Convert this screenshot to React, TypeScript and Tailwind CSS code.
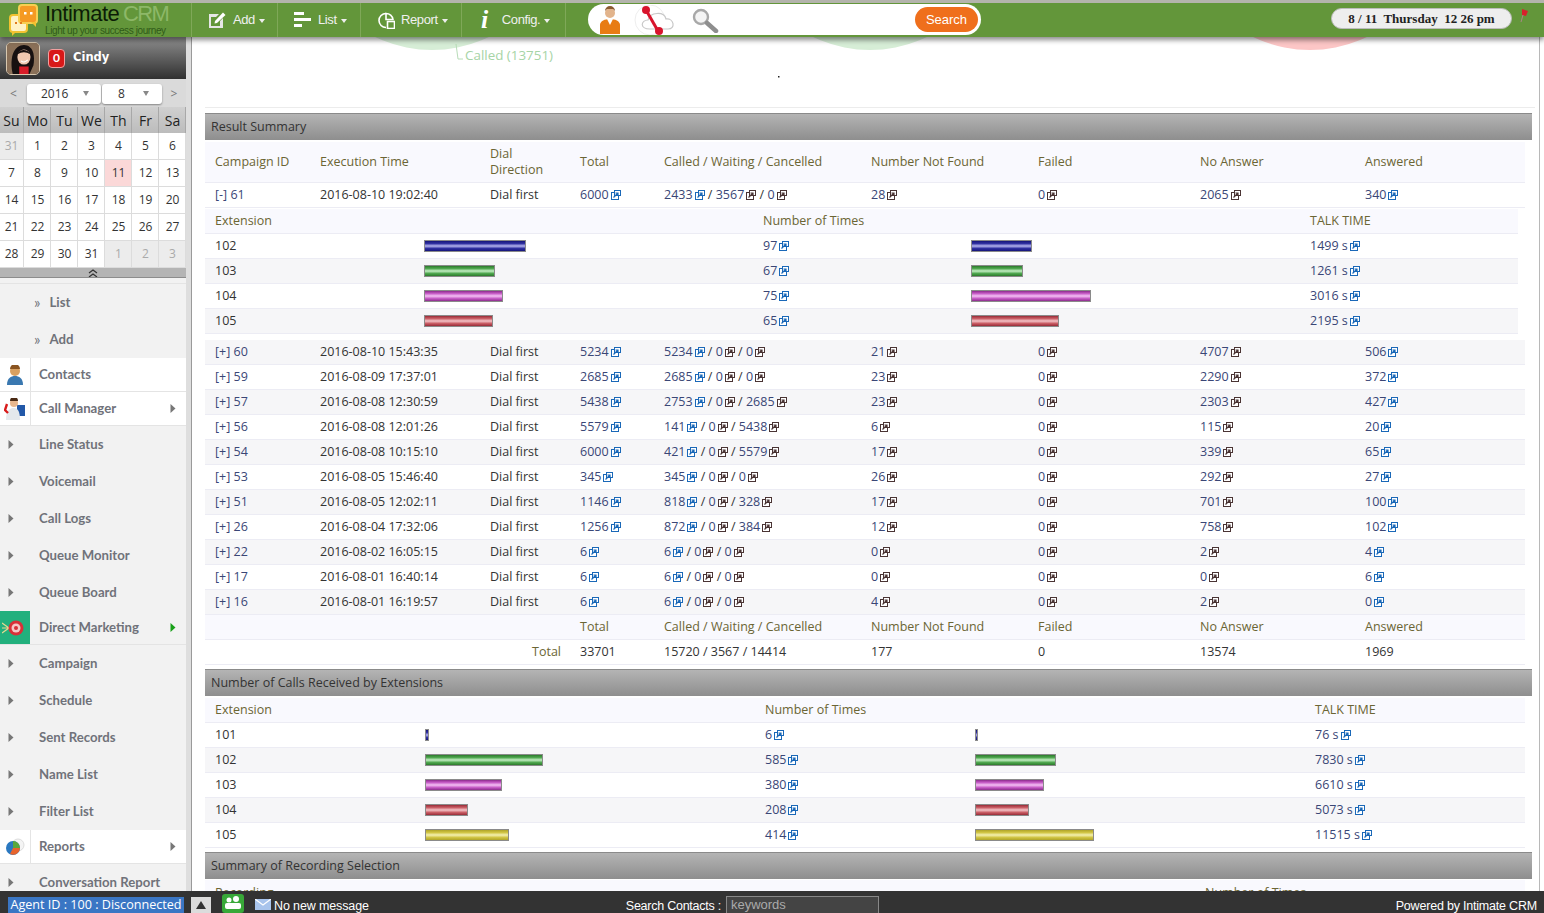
import type { ReactNode } from "react";

const mainCols = "grid grid-cols-[105px_170px_90px_84px_207px_167px_162px_165px_1fr] pl-[10px] w-[1320px]";
const subCols = "grid grid-cols-[209px_339px_208px_339px_1fr] pl-[10px] w-[1313px]";
const extCols = "grid grid-cols-[210px_340px_210px_340px_1fr] pl-[10px] w-[1320px]";

const barColors = {
  blue: "bg-[linear-gradient(180deg,#14147a_0%,#2f2fa0_25%,#b4b4ee_50%,#2f2fa0_75%,#14147a_100%)]",
  green: "bg-[linear-gradient(180deg,#2c7a2c_0%,#4ea64e_25%,#c4eec4_50%,#4ea64e_75%,#2c7a2c_100%)]",
  magenta: "bg-[linear-gradient(180deg,#8c2c8c_0%,#c65cc6_25%,#f4c0f4_50%,#c65cc6_75%,#8c2c8c_100%)]",
  red: "bg-[linear-gradient(180deg,#982c38_0%,#c85c64_25%,#f4c4c8_50%,#c85c64_75%,#982c38_100%)]",
  yellow: "bg-[linear-gradient(180deg,#b0a428_0%,#d0c444_25%,#f4f0b0_50%,#d0c444_75%,#b0a428_100%)]",
};
type BarColor = keyof typeof barColors;

const campaignRows = [
  ["60", "2016-08-10 15:43:35", "5234", "5234", "0", "0", "21", "0", "4707", "506"],
  ["59", "2016-08-09 17:37:01", "2685", "2685", "0", "0", "23", "0", "2290", "372"],
  ["57", "2016-08-08 12:30:59", "5438", "2753", "0", "2685", "23", "0", "2303", "427"],
  ["56", "2016-08-08 12:01:26", "5579", "141", "0", "5438", "6", "0", "115", "20"],
  ["54", "2016-08-08 10:15:10", "6000", "421", "0", "5579", "17", "0", "339", "65"],
  ["53", "2016-08-05 15:46:40", "345", "345", "0", "0", "26", "0", "292", "27"],
  ["51", "2016-08-05 12:02:11", "1146", "818", "0", "328", "17", "0", "701", "100"],
  ["26", "2016-08-04 17:32:06", "1256", "872", "0", "384", "12", "0", "758", "102"],
  ["22", "2016-08-02 16:05:15", "6", "6", "0", "0", "0", "0", "2", "4"],
  ["17", "2016-08-01 16:40:14", "6", "6", "0", "0", "0", "0", "0", "6"],
  ["16", "2016-08-01 16:19:57", "6", "6", "0", "0", "4", "0", "2", "0"],
];

const subRows: { ext: string; a: number; n: string; b: number; t: string; c: BarColor }[] = [
  { ext: "102", a: 102, n: "97", b: 61, t: "1499 s", c: "blue" },
  { ext: "103", a: 71, n: "67", b: 52, t: "1261 s", c: "green" },
  { ext: "104", a: 79, n: "75", b: 120, t: "3016 s", c: "magenta" },
  { ext: "105", a: 69, n: "65", b: 88, t: "2195 s", c: "red" },
];

const extRows: { ext: string; a: number; n: string; b: number; t: string; c: BarColor }[] = [
  { ext: "101", a: 4, n: "6", b: 3, t: "76 s", c: "blue" },
  { ext: "102", a: 118, n: "585", b: 81, t: "7830 s", c: "green" },
  { ext: "103", a: 77, n: "380", b: 69, t: "6610 s", c: "magenta" },
  { ext: "104", a: 43, n: "208", b: 54, t: "5073 s", c: "red" },
  { ext: "105", a: 84, n: "414", b: 119, t: "11515 s", c: "yellow" },
];

const weeks = [
  [31, 1, 2, 3, 4, 5, 6],
  [7, 8, 9, 10, 11, 12, 13],
  [14, 15, 16, 17, 18, 19, 20],
  [21, 22, 23, 24, 25, 26, 27],
  [28, 29, 30, 31, 1, 2, 3],
];

function ExtIcon({ dark }: { dark?: boolean }) {
  const color = dark ? "#4a3434" : "#1a68b8";
  return (
    <svg width="10" height="10" viewBox="0 0 10 10" className="inline-block ml-[2px] align-[-1px]">
      <rect x="0.5" y="2.5" width="7" height="7" fill="#fff" stroke={color} />
      <rect x="3.5" y="0.5" width="6" height="5" fill="#fff" stroke={color} />
      <path d="M2.5 7.5 L6.5 3.5 M4.5 3 H7 V5.5" fill="none" stroke={color} strokeWidth="1.2" />
    </svg>
  );
}

function Num({ v, dark }: { v: string; dark?: boolean }) {
  return (
    <span className="text-[#3a4676] whitespace-nowrap">
      {v}
      <ExtIcon dark={dark} />
    </span>
  );
}

function Bar({ w, c }: { w: number; c: BarColor }) {
  return <div className={`h-[12px] border border-[#8a8a8a] ${barColors[c]}`} style={{ width: w }} />;
}

function CampaignRow({ row, open, even }: { row: string[]; open?: boolean; even?: boolean }) {
  const [id, time, total, called, waiting, cancelled, nnf, failed, noAnswer, answered] = row;
  return (
    <div className={`${mainCols} h-[25px] items-center border-b border-[#ececf4] ${even ? "bg-[#f6f6f8]" : "bg-white"}`}>
      <span className="text-[#3a4676]">{open ? "[-]" : "[+]"} {id}</span>
      <span>{time}</span>
      <span>Dial first</span>
      <Num v={total} />
      <span className="text-[#3a4676] whitespace-nowrap">
        <Num v={called} /> <span className="text-[#333]">/</span> <Num v={waiting} dark /> <span className="text-[#333]">/</span> <Num v={cancelled} dark />
      </span>
      <Num v={nnf} dark />
      <Num v={failed} dark />
      <Num v={noAnswer} dark />
      <Num v={answered} />
    </div>
  );
}

function Section({ title }: { title: string }) {
  return (
    <div className="h-[27px] w-[1327px] flex items-center pl-[6px] bg-[linear-gradient(180deg,#b4b4b4,#8e8e8e)] border-t border-[#8a8a8a] text-[#333]">
      {title}
    </div>
  );
}

function Tri({ green }: { green?: boolean }) {
  return (
    <svg width="6" height="9" viewBox="0 0 6 9">
      <path d="M0.5 0 L5.5 4.5 L0.5 9 Z" fill={green ? "#19a019" : "#777"} />
    </svg>
  );
}

function SideHead({ label, icon, arrow }: { label: string; icon: ReactNode; arrow?: boolean }) {
  return (
    <div className="h-[34px] shrink-0 flex items-center bg-white border-b border-[#e4e4e4]">
      <div className="w-[31px] h-full flex items-center justify-center border-r border-[#e4e4e4]">{icon}</div>
      <span className="pl-[8px] flex-1">{label}</span>
      {arrow && (
        <span className="pr-[10px] flex">
          <Tri />
        </span>
      )}
    </div>
  );
}

function SideItem({ label }: { label: string }) {
  return (
    <div className="h-[37px] shrink-0 flex items-center">
      <span className="w-[39px] pl-[8px] flex">
        <Tri />
      </span>
      <span className="whitespace-nowrap">{label}</span>
    </div>
  );
}

function Caret() {
  return <span className="inline-block ml-[4px] align-middle border-x-[3.5px] border-t-[4px] border-x-transparent border-t-[#eee]" />;
}

function NavItem({ w, icon, label, gap }: { w: string; icon: ReactNode; label: string; gap: string }) {
  return (
    <div className={`${w} h-full flex items-center pl-[16px] border-r border-[#7fa858] ${gap}`}>
      {icon}
      <span className="whitespace-nowrap">
        {label}
        <Caret />
      </span>
    </div>
  );
}

function Logo() {
  return (
    <svg width="30" height="34" viewBox="0 0 30 34">
      <rect x="1" y="12" width="17" height="17" rx="3" fill="#fff2c4" stroke="#f2c230" strokeWidth="2" />
      <path d="M3 28 V33 L8 28 Z" fill="#f2c230" />
      <rect x="10" y="2" width="18" height="18" rx="3" fill="#f59a23" stroke="#f7cf52" strokeWidth="2" />
      <path d="M22 19 L27 24 V19 Z" fill="#f2c230" />
      <rect x="15" y="9" width="2.5" height="2.5" fill="#fff" />
      <rect x="21" y="9" width="2.5" height="2.5" fill="#fff" />
      <rect x="6" y="19" width="2" height="2" fill="#e07a20" />
      <rect x="11" y="19" width="2" height="2" fill="#e07a20" />
    </svg>
  );
}

function Header() {
  return (
    <div className="relative z-10 h-[37px] shrink-0 flex items-stretch bg-[#63963a] border-t-[3px] border-[#b4b4ac] shadow-[0_3px_5px_rgba(0,0,0,0.45)] font-['Liberation_Sans',sans-serif] text-[13px] text-[#f0f0f0] tracking-[-0.4px]">
      <div className="w-[192px] flex items-center border-r border-[#7fa858] pl-[9px] gap-[6px]">
        <Logo />
        <div className="flex flex-col leading-none -mt-[2px]">
          <span className="text-[22px] tracking-[-0.5px] text-[#0c1c06] whitespace-nowrap">
            Intimate <span className="text-[#8db868] tracking-[-1.6px] -ml-[2px]">CRM</span>
          </span>
          <span className="text-[10px] text-[#2f5a18] whitespace-nowrap mt-[1px]">Light up your success journey</span>
        </div>
      </div>
      <NavItem
        w="w-[86px]"
        gap="gap-[7px]"
        label="Add"
        icon={
          <svg width="18" height="18" viewBox="0 0 18 18">
            <path d="M1 3 H11 L8 6 H3 V15 H12 V10 L15 7 V17 H1 Z" fill="#e6e6e6" />
            <path d="M7 10 L15 1.5 L17.5 4 L9 12 L6.5 12.5 Z" fill="#fff" />
          </svg>
        }
      />
      <NavItem
        w="w-[83px]"
        gap="gap-[7px]"
        label="List"
        icon={
          <svg width="17" height="16" viewBox="0 0 17 16">
            <rect x="0" y="0" width="10" height="3" fill="#fff" />
            <rect x="0" y="6" width="17" height="3" fill="#fff" />
            <rect x="0" y="12" width="8" height="3" fill="#fff" />
          </svg>
        }
      />
      <div className="w-[101px] h-full flex items-center pl-[17px] gap-[6px] border-r border-[#7fa858]">
        <svg width="17" height="17" viewBox="0 0 17 17">
          <path d="M8 1.5 A7 7 0 1 0 8 15.5" fill="none" stroke="#fff" strokeWidth="1.6" />
          <path d="M8 1.5 A7 7 0 0 1 15 7.5 H8 Z" fill="none" stroke="#fff" strokeWidth="1.6" />
          <rect x="9.5" y="9.5" width="7" height="7" fill="none" stroke="#fff" strokeWidth="1.6" />
        </svg>
        <span className="whitespace-nowrap">
          Report
          <Caret />
        </span>
      </div>
      <div className="w-[104px] h-full flex items-center pl-[19px] gap-[14px] border-r border-[#7fa858]">
        <span className="font-['Liberation_Serif',serif] italic font-bold text-[26px] leading-none text-white">i</span>
        <span className="whitespace-nowrap">
          Config.
          <Caret />
        </span>
      </div>
      <div className="ml-[22px] mt-[1px] w-[393px] h-[31px] flex items-center rounded-full bg-white pr-[3px]">
        <svg width="26" height="30" viewBox="0 0 26 30" className="ml-[9px]">
          <circle cx="13" cy="8" r="5" fill="#e2b48c" />
          <path d="M8 6 A5 5 0 0 1 18 6 L16 4 H10 Z" fill="#8a5a30" />
          <path d="M3 29 V20 C3 16 8 14 13 14 C18 14 23 16 23 20 V29 Z" fill="#e87c14" />
          <path d="M10 14 L13 20 L16 14 Z" fill="#fff" />
        </svg>
        <svg width="48" height="30" viewBox="0 0 48 30" className="ml-[11px]">
          <circle cx="16" cy="15" r="15" fill="none" stroke="#eee" />
          <path d="M16 24 C5 24 7 15 14 15 C16 7 30 6 32 14 C40 13 42 24 34 24 Z" fill="#fff" stroke="#c8c8c8" strokeWidth="1.2" />
          <path d="M12 5 L24 26" stroke="#d8142c" strokeWidth="3" />
          <circle cx="12" cy="5" r="4" fill="#d8142c" />
          <circle cx="25" cy="26" r="4" fill="#d8142c" />
        </svg>
        <svg width="28" height="26" viewBox="0 0 28 26" className="ml-[9px]">
          <circle cx="10" cy="10" r="7" fill="#f4f4f4" stroke="#a8a8a8" strokeWidth="2.4" />
          <path d="M16 16 L25 24" stroke="#8e8e8e" strokeWidth="4.5" strokeLinecap="round" />
        </svg>
        <div className="flex-1" />
        <div className="w-[63px] h-[25px] rounded-full bg-[#ef6f1c] flex items-center justify-center text-white tracking-normal">Search</div>
      </div>
      <div className="flex-1" />
      <div className="mt-[5px] mr-[7px] w-[181px] h-[21px] rounded-full bg-[#eeeeee] border border-[#bcbcbc] flex items-center justify-center font-['Liberation_Serif',serif] font-bold text-[13px] text-[#222] tracking-normal whitespace-pre">
        8 / 11  Thursday  12 26 pm
      </div>
      <svg width="10" height="16" viewBox="0 0 10 16" className="mt-[5px] mr-[15px]">
        <path d="M3 1 L9 3 L7 8 L3 7 Z" fill="#d8202c" />
        <path d="M4 7 L2 14" stroke="#a88" strokeWidth="1" />
      </svg>
    </div>
  );
}

function Avatar() {
  return (
    <svg width="34" height="33" viewBox="0 0 34 33" className="rounded-[5px] border border-[#d8c8b0]">
      <rect width="34" height="33" fill="#8a7058" />
      <path d="M6 33 C2 14 8 2 18 2 C28 2 30 14 28 24 L24 33 Z" fill="#161010" />
      <ellipse cx="18" cy="15" rx="7" ry="8" fill="#f0c8b0" />
      <path d="M11 12 C13 6 22 6 25 12 C20 9 16 9 11 12 Z" fill="#161010" />
      <path d="M15 19 Q18 22 22 18" stroke="#fff" strokeWidth="1.2" fill="none" />
      <rect x="13" y="25" width="10" height="8" fill="#d81c28" />
    </svg>
  );
}

function Sidebar() {
  return (
    <div className="w-[192px] shrink-0 h-full flex overflow-hidden border-r border-[#9a9a9a] bg-[#dedede]">
      <div className="w-[186px] shrink-0 h-full flex flex-col bg-[#f2f2f2] font-['Lato',sans-serif] font-bold text-[13.2px] text-[#70727a]">
        <div className="h-[42px] shrink-0 flex items-center pl-[6px] bg-[linear-gradient(180deg,#8e8e8e,#303030)]">
          <Avatar />
          <span className="ml-[8px] w-[17px] h-[19px] rounded-[4px] bg-[#d81818] border border-[#f0a0a0] text-white text-[12px] flex items-center justify-center">0</span>
          <span className="ml-[8px] text-white font-['DejaVu_Sans',sans-serif] text-[11.5px]">Cindy</span>
        </div>
        <div className="h-[28px] shrink-0 flex items-center pt-[1px] bg-[#dadada] font-['Open_Sans',sans-serif] font-normal text-[12px] text-[#333]">
          <span className="w-[27px] text-center text-[#777]">&lt;</span>
          <div className="w-[74px] h-[20px] rounded-[3px] bg-white shadow-[0_1px_2px_rgba(0,0,0,0.4)] flex items-center pl-[14px] gap-[15px]">
            2016
            <span className="border-x-[3.5px] border-t-[5px] border-x-transparent border-t-[#888]" />
          </div>
          <div className="ml-[1px] w-[60px] h-[20px] rounded-[3px] bg-white shadow-[0_1px_2px_rgba(0,0,0,0.4)] flex items-center pl-[16px] gap-[18px]">
            8
            <span className="border-x-[3.5px] border-t-[5px] border-x-transparent border-t-[#888]" />
          </div>
          <span className="flex-1 text-center text-[#777]">&gt;</span>
        </div>
        <div className="grid grid-cols-[24px_repeat(6,27px)] h-[26px] shrink-0 font-['Open_Sans',sans-serif] font-normal text-[14px] text-[#222] bg-[linear-gradient(180deg,#d0d0d0,#bcbcbc)]">
          {["Su", "Mo", "Tu", "We", "Th", "Fr", "Sa"].map((d, i) => (
            <div key={d} className={`flex items-center justify-center border-r border-[#a8a8a8] ${i > 0 ? "pl-[1px]" : ""}`}>{d}</div>
          ))}
        </div>
        <div className="shrink-0 bg-white font-['Open_Sans',sans-serif] font-normal text-[12px] text-[#333]">
          {weeks.map((week, i) => (
            <div key={i} className="grid grid-cols-[24px_repeat(6,27px)] h-[27px]">
              {week.map((d, j) => {
                const outside = (i === 0 && j === 0) || (i === 4 && j > 3);
                const today = d === 11;
                return (
                  <div
                    key={j}
                    className={`flex items-center justify-center border-r border-b border-[#dcdcdc] ${j > 0 ? "pl-[1px]" : ""} ${outside ? "bg-[#ececec] text-[#aaa]" : ""} ${today ? "bg-[#fbd8d8]" : ""}`}
                  >
                    {d}
                  </div>
                );
              })}
            </div>
          ))}
        </div>
        <div className="h-[10px] shrink-0 bg-[#b4b4b4] border-b border-[#8c8c8c] flex items-center justify-center text-[#333]">
          <svg width="10" height="8" viewBox="0 0 10 8">
            <path d="M1 4 L5 1 L9 4 M1 8 L5 5 L9 8" fill="none" stroke="#333" strokeWidth="1.2" />
          </svg>
        </div>
        <div className="h-[6px] shrink-0 border-b border-[#e4e4e4]" />
        <div className="shrink-0">
          <div className="h-[37px] flex items-center pl-[34px] gap-[9px]"><span className="font-normal text-[15px] leading-none">»</span>List</div>
          <div className="h-[37px] flex items-center pl-[34px] gap-[9px]"><span className="font-normal text-[15px] leading-none">»</span>Add</div>
        </div>
        <SideHead
          label="Contacts"
          icon={
            <svg width="16" height="20" viewBox="0 0 16 20">
              <circle cx="8" cy="6" r="5" fill="#d8a060" />
              <path d="M3 4 A5 5 0 0 1 13 4 Z" fill="#8a5420" />
              <path d="M0 20 C0 13 4 11 8 11 C12 11 16 13 16 20 Z" fill="#3a78b0" />
            </svg>
          }
        />
        <SideHead
          label="Call Manager"
          arrow
          icon={
            <svg width="22" height="22" viewBox="0 0 22 22">
              <rect x="13" y="7" width="8" height="11" fill="#2258a8" />
              <circle cx="10" cy="5" r="4" fill="#e8b890" />
              <path d="M6 3 A4 4 0 0 1 14 3 Z" fill="#4a2a14" />
              <path d="M2 22 C2 12 6 10 10 10 C14 10 16 14 16 22 Z" fill="#e4e8ec" />
              <path d="M3 6 L1 12 L4 15" stroke="#d81c1c" strokeWidth="2.4" fill="none" />
            </svg>
          }
        />
        <SideItem label="Line Status" />
        <SideItem label="Voicemail" />
        <SideItem label="Call Logs" />
        <SideItem label="Queue Monitor" />
        <SideItem label="Queue Board" />
        <div className="h-[34px] shrink-0 flex items-center border-b border-[#e4e4e4]">
          <div className="w-[30px] h-full bg-[#22b07d] flex items-center justify-center">
            <svg width="26" height="18" viewBox="0 0 26 18">
              <path d="M0 4 L7 9 M0 9 H7 M0 14 L7 9" stroke="#e8d890" strokeWidth="1.2" />
              <circle cx="14" cy="9" r="7.5" fill="#d83038" />
              <circle cx="14" cy="9" r="4.5" fill="#f4c8c8" />
              <circle cx="14" cy="9" r="2" fill="#d83038" />
            </svg>
          </div>
          <span className="pl-[9px] flex-1">Direct Marketing</span>
          <span className="pr-[10px] flex"><Tri green /></span>
        </div>
        <SideItem label="Campaign" />
        <SideItem label="Schedule" />
        <SideItem label="Sent Records" />
        <SideItem label="Name List" />
        <SideItem label="Filter List" />
        <SideHead
          label="Reports"
          arrow
          icon={
            <svg width="20" height="18" viewBox="0 0 20 18">
              <circle cx="13" cy="7" r="6" fill="#f4f4f4" stroke="#ddd" />
              <circle cx="8" cy="10" r="7" fill="#2a78c0" />
              <path d="M8 10 L15 10 A7 7 0 0 1 5 16 Z" fill="#e8642c" />
              <path d="M8 10 L8 3 A7 7 0 0 1 15 10 Z" fill="#5aa83c" />
            </svg>
          }
        />
        <SideItem label="Conversation Report" />
      </div>
    </div>
  );
}

function Content() {
  return (
    <div className="w-[1348px] shrink-0 h-full overflow-hidden bg-white border-r border-[#b8b8b8] pl-[13px] font-['Open_Sans',sans-serif] text-[12.5px] text-[#333]">
      <svg width="1335" height="70" viewBox="205 37 1335 70" className="block">
        <circle cx="432" cy="-81" r="131" fill="#d6edd6" />
        <circle cx="870" cy="-81" r="131" fill="#d6edd6" />
        <circle cx="1310" cy="-81" r="131" fill="#fcc6c6" />
        <path d="M456 44 L458 59 H463" fill="none" stroke="#b8dcb8" />
        <text x="465" y="60" fontSize="13.4" fill="#a6d4a6">Called (13751)</text>
        <rect x="778" y="76" width="1.5" height="1.5" fill="#222" />
      </svg>
      <div className="h-[6px] w-[1330px] border-t border-[#ececec]" />
      <Section title="Result Summary" />
      <div className={`${mainCols} mt-[2px] h-[41px] items-center bg-[#f9f9fe] border-b border-[#ececf4] text-[#6b6534]`}>
        <span>Campaign ID</span>
        <span>Execution Time</span>
        <span className="leading-[16px]">Dial<br />Direction</span>
        <span>Total</span>
        <span>Called / Waiting / Cancelled</span>
        <span>Number Not Found</span>
        <span>Failed</span>
        <span>No Answer</span>
        <span>Answered</span>
      </div>
      <CampaignRow open row={["61", "2016-08-10 19:02:40", "6000", "2433", "3567", "0", "28", "0", "2065", "340"]} />
      <div className={`${subCols} mt-[1px] h-[25px] items-center bg-[#f9f9fe] border-b border-[#ececf4] text-[#6b6534]`}>
        <span>Extension</span>
        <span />
        <span>Number of Times</span>
        <span />
        <span>TALK TIME</span>
      </div>
      {subRows.map((r, i) => (
        <div key={r.ext} className={`${subCols} h-[25px] items-center border-b border-[#ececf4] ${i % 2 ? "bg-[#f6f6f8]" : "bg-white"}`}>
          <span>{r.ext}</span>
          <Bar w={r.a} c={r.c} />
          <Num v={r.n} />
          <Bar w={r.b} c={r.c} />
          <Num v={r.t} />
        </div>
      ))}
      <div className="h-[6px]" />
      {campaignRows.map((row, i) => (
        <CampaignRow key={row[0]} row={row} even={i % 2 === 0} />
      ))}
      <div className={`${mainCols} h-[25px] items-center bg-[#f9f9fe] border-b border-[#ececf4] text-[#6b6534]`}>
        <span />
        <span />
        <span />
        <span>Total</span>
        <span>Called / Waiting / Cancelled</span>
        <span>Number Not Found</span>
        <span>Failed</span>
        <span>No Answer</span>
        <span>Answered</span>
      </div>
      <div className={`${mainCols} h-[25px] items-center bg-white border-b border-[#ececf4]`}>
        <span />
        <span />
        <span className="text-right pr-[19px] text-[#6b6534]">Total</span>
        <span>33701</span>
        <span>15720 / 3567 / 14414</span>
        <span>177</span>
        <span>0</span>
        <span>13574</span>
        <span>1969</span>
      </div>
      <div className="h-[4px]" />
      <Section title="Number of Calls Received by Extensions" />
      <div className={`${extCols} mt-[2px] h-[25px] items-center bg-[#f9f9fe] border-b border-[#ececf4] text-[#6b6534]`}>
        <span>Extension</span>
        <span />
        <span>Number of Times</span>
        <span />
        <span>TALK TIME</span>
      </div>
      {extRows.map((r, i) => (
        <div key={r.ext} className={`${extCols} h-[25px] items-center border-b border-[#ececf4] ${i % 2 ? "bg-[#f6f6f8]" : "bg-white"}`}>
          <span>{r.ext}</span>
          <Bar w={r.a} c={r.c} />
          <Num v={r.n} />
          <Bar w={r.b} c={r.c} />
          <Num v={r.t} />
        </div>
      ))}
      <div className="h-[4px]" />
      <Section title="Summary of Recording Selection" />
      <div className="mt-[1px] h-[40px] w-[1320px] pl-[10px] pt-[4px] flex bg-[#f9f9fe] text-[#6b6534]">
        <span className="w-[990px]">Recording</span>
        <span>Number of Times</span>
      </div>
    </div>
  );
}

function Footer() {
  return (
    <div className="h-[22px] shrink-0 flex items-end bg-[#333333] font-['Liberation_Sans',sans-serif] text-[12.5px] text-white">
      <span className="ml-[8px] w-[176px] h-[16px] pt-[1px] bg-[#3a76c4] flex items-center justify-center font-['Open_Sans',sans-serif] text-[12.6px] whitespace-nowrap">Agent ID : 100 : Disconnected</span>
      <span className="ml-[7px] w-[20px] h-[16px] bg-[#dcdcdc] flex items-center justify-center">
        <span className="border-x-[5px] border-b-[8px] border-x-transparent border-b-[#333]" />
      </span>
      <svg width="22" height="19" viewBox="0 0 22 19" className="ml-[11px]">
        <rect width="22" height="19" rx="3" fill="#38a838" />
        <circle cx="7" cy="6" r="2.5" fill="#fff" />
        <circle cx="14" cy="5" r="3" fill="#fff" />
        <rect x="3" y="9" width="16" height="6" rx="2" fill="#fff" />
      </svg>
      <svg width="16" height="11" viewBox="0 0 16 11" className="ml-[11px] mb-[3px]">
        <rect width="16" height="11" fill="#a8c4ec" />
        <path d="M0 0 L8 6 L16 0" fill="none" stroke="#fff" strokeWidth="1.2" />
      </svg>
      <span className="ml-[3px] h-[16px] leading-[18px] tracking-[-0.01em]">No new message</span>
      <span className="ml-[257px] h-[16px] leading-[18px] tracking-[-0.25px] whitespace-nowrap">Search Contacts :</span>
      <input
        readOnly
        placeholder="keywords"
        className="ml-[5px] w-[153px] h-[17px] bg-[#444] border border-[#888] border-b-0 px-[4px] text-[13px] placeholder:text-[#aaa] outline-none"
      />
      <span className="ml-auto mr-[7px] h-[16px] leading-[18px] tracking-[-0.2px] whitespace-nowrap">Powered by Intimate CRM</span>
    </div>
  );
}

export default function App() {
  return (
    <div className="w-[1544px] h-[913px] overflow-hidden flex flex-col bg-white">
      <Header />
      <div className="flex-1 min-h-0 flex">
        <Sidebar />
        <Content />
      </div>
      <Footer />
    </div>
  );
}
